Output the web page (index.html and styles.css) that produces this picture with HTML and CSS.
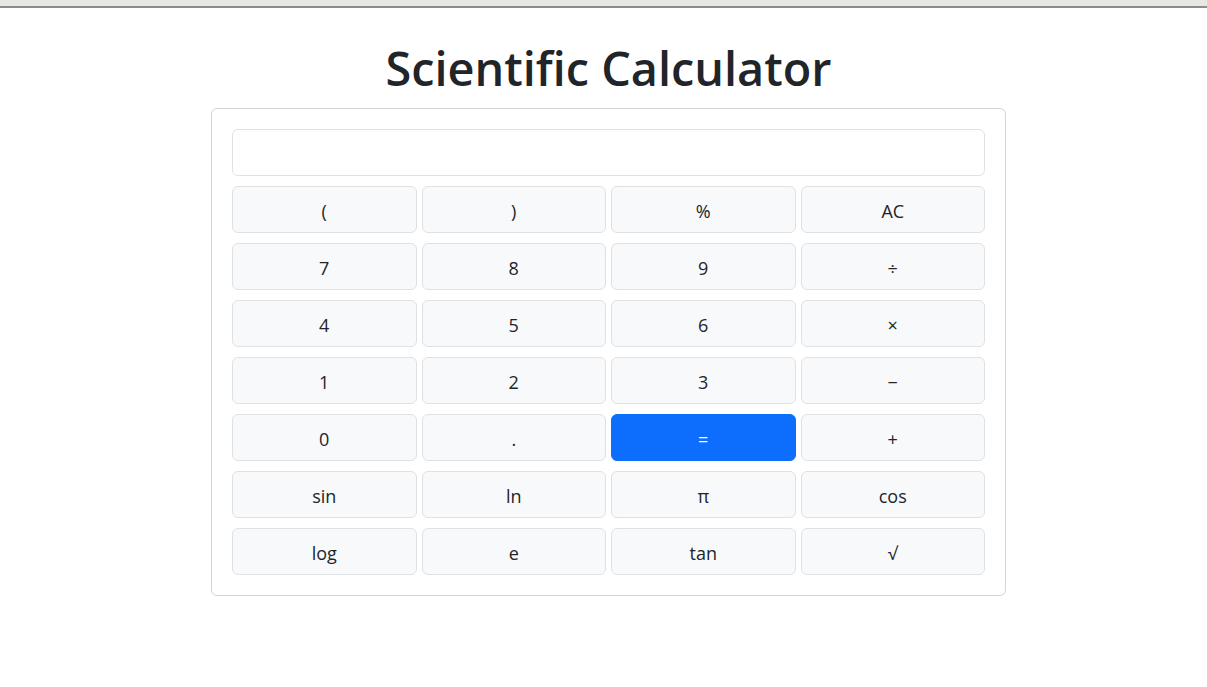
FILE: index.html
```html
<!DOCTYPE html>
<html lang="en">
<head>
<meta charset="utf-8">
<title>Scientific Calculator</title>
<link rel="stylesheet" href="styles.css">
</head>
<body>
<div class="topbar"></div>
<main class="page">
  <h1 class="title">Scientific Calculator</h1>
  <section class="card">
    <input class="display" type="text" aria-label="display">
    <div class="keys">
      <button class="key">(</button>
      <button class="key">)</button>
      <button class="key">%</button>
      <button class="key">AC</button>
      <button class="key">7</button>
      <button class="key">8</button>
      <button class="key">9</button>
      <button class="key">÷</button>
      <button class="key">4</button>
      <button class="key">5</button>
      <button class="key">6</button>
      <button class="key">×</button>
      <button class="key">1</button>
      <button class="key">2</button>
      <button class="key">3</button>
      <button class="key">−</button>
      <button class="key">0</button>
      <button class="key">.</button>
      <button class="key key-primary">=</button>
      <button class="key">+</button>
      <button class="key">sin</button>
      <button class="key">ln</button>
      <button class="key">π</button>
      <button class="key">cos</button>
      <button class="key">log</button>
      <button class="key">e</button>
      <button class="key">tan</button>
      <button class="key">√</button>
    </div>
  </section>
</main>
</body>
</html>
```
FILE: styles.css
```css
* { box-sizing: border-box; }
html, body { margin: 0; padding: 0; background: #fff; }
body {
  font-family: "Open Sans", "Noto Sans", "Liberation Sans", sans-serif;
  color: #212529;
}
.topbar {
  height: 8px;
  background: #e9e7e1;
  border-bottom: 2px solid #8c8c8a;
}
.page {
  padding-left: 10px;
  display: flex;
  flex-direction: column;
  align-items: center;
}
.title {
  margin: 32px 0 12px;
  font-size: 46.8px;
  font-weight: 600;
  line-height: 56px;
  color: #212529;
}
.card {
  width: 795px;
  border: 1px solid #d3d4d5;
  border-radius: 6px;
  padding: 20px;
  display: flex;
  flex-direction: column;
  gap: 10px;
}
.display {
  height: 47px;
  width: 100%;
  border: 1px solid #dee2e6;
  border-radius: 6px;
  background: #fff;
  font: inherit;
  font-size: 18px;
  padding: 0 12px;
}
.keys {
  display: grid;
  grid-template-columns: repeat(4, 1fr);
  column-gap: 5px;
  row-gap: 10px;
}
.key {
  height: 47px;
  border: 1px solid #dfe2e5;
  border-radius: 6px;
  background: #f8f9fa;
  color: #212529;
  font-family: inherit;
  font-size: 18px;
  padding: 3px 0 0;
  cursor: pointer;
}
.key-primary {
  background: #0d6efd;
  border-color: #0d6efd;
  color: #fff;
}
```
